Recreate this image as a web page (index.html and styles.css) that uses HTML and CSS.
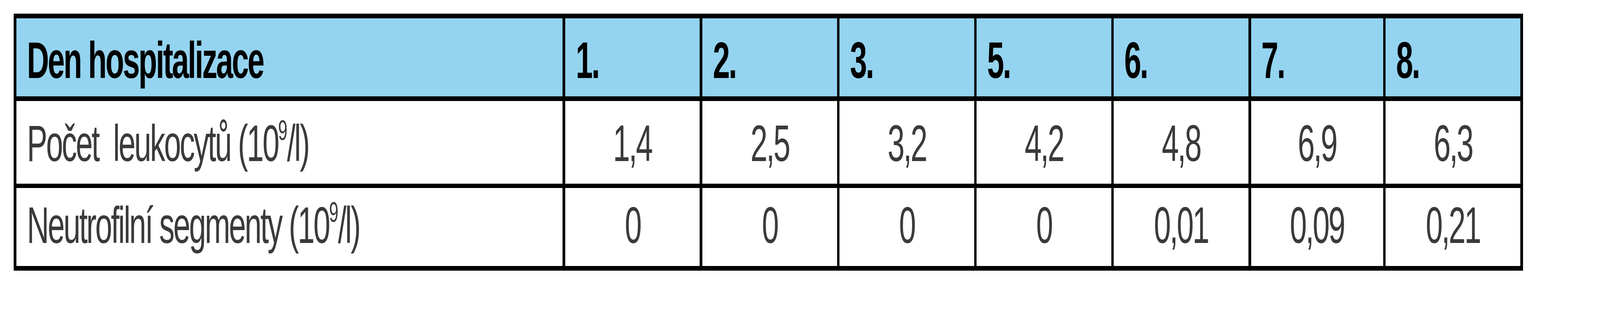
FILE: index.html
```html
<!DOCTYPE html>
<html lang="cs">
<head>
<meta charset="utf-8">
<title>Den hospitalizace</title>
<link rel="stylesheet" href="styles.css">
</head>
<body>
<div class="page">
  <div class="tbl" role="table">
    <div class="cell hd label" role="columnheader"><span class="t">Den hospitalizace</span></div>
    <div class="cell hd" role="columnheader"><span class="t">1.</span></div>
    <div class="cell hd" role="columnheader"><span class="t">2.</span></div>
    <div class="cell hd" role="columnheader"><span class="t">3.</span></div>
    <div class="cell hd" role="columnheader"><span class="t">5.</span></div>
    <div class="cell hd" role="columnheader"><span class="t">6.</span></div>
    <div class="cell hd" role="columnheader"><span class="t">7.</span></div>
    <div class="cell hd" role="columnheader"><span class="t">8.</span></div>

    <div class="cell r1 label" role="rowheader"><span class="t">Počet&nbsp; leukocytů (10<span class="sup">9</span>/l)</span></div>
    <div class="cell r1 num" role="cell"><span class="t">1,4</span></div>
    <div class="cell r1 num" role="cell"><span class="t">2,5</span></div>
    <div class="cell r1 num" role="cell"><span class="t">3,2</span></div>
    <div class="cell r1 num" role="cell"><span class="t">4,2</span></div>
    <div class="cell r1 num" role="cell"><span class="t">4,8</span></div>
    <div class="cell r1 num" role="cell"><span class="t">6,9</span></div>
    <div class="cell r1 num" role="cell"><span class="t">6,3</span></div>

    <div class="cell r2 label" role="rowheader"><span class="t">Neutrofilní segmenty (10<span class="sup">9</span>/l)</span></div>
    <div class="cell r2 num" role="cell"><span class="t">0</span></div>
    <div class="cell r2 num" role="cell"><span class="t">0</span></div>
    <div class="cell r2 num" role="cell"><span class="t">0</span></div>
    <div class="cell r2 num" role="cell"><span class="t">0</span></div>
    <div class="cell r2 num" role="cell"><span class="t">0,01</span></div>
    <div class="cell r2 num" role="cell"><span class="t">0,09</span></div>
    <div class="cell r2 num" role="cell"><span class="t">0,21</span></div>
  </div>
</div>
</body>
</html>
```
FILE: styles.css
```css
/* The reference canvas is 6859px wide; the window is 4096px wide.
   Horizontal measures are the reference values x 0.597172,
   vertical measures are unchanged, and glyphs are condensed to match. */

html, body {
  margin: 0;
  padding: 0;
  background: #ffffff;
}

body {
  font-family: "Liberation Sans", Arial, sans-serif;
}

.page {
  padding: 35px 0 0 35.23px;
}

.tbl {
  display: grid;
  grid-template-columns: 1398.58px 344.57px 344.57px 344.57px 344.57px 344.57px 338px 345.17px;
  grid-template-rows: 200px 212px 200px;
  column-gap: 6.57px;
  row-gap: 11.5px;
  padding: 12px 6.57px;
  background: #000000;
  width: max-content;
}

.cell {
  box-sizing: border-box;
  font-size: 131px;
  line-height: 131px;
  letter-spacing: -5.5px;
  white-space: nowrap;
  padding-left: 26.87px;
  background: #ffffff;
  color: #3a3a3a;
}

.t {
  display: inline-block;
  transform: scaleX(0.597172);
  transform-origin: 0 0;
}

.hd {
  background: #94d4f0;
  color: #000000;
  font-weight: bold;
  padding-top: 42px;
}

.r1 {
  padding-top: 43px;
}

.r2 {
  padding-top: 30px;
}

.num {
  padding-left: 0;
  text-align: center;
}

.num .t {
  transform-origin: 50% 0;
}

.sup {
  font-size: 72px;
  line-height: 0;
  letter-spacing: -2px;
  vertical-align: 54px;
}
```
